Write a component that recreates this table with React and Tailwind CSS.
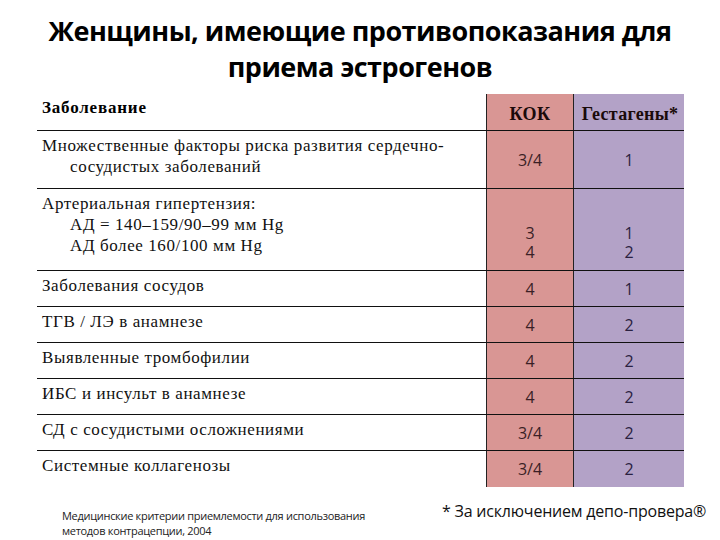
import React from 'react';

const rows = [
  { h: 'h-[58px]', text: ['Множественные факторы риска развития сердечно-', 'сосудистых заболеваний'], kok: ['3/4'], gest: ['1'], numTop: 'pt-[20px]' },
  { h: 'h-[82px]', text: ['Артериальная гипертензия:', 'АД = 140–159/90–99 мм Hg', 'АД более 160/100 мм Hg'], kok: ['3', '4'], gest: ['1', '2'], numTop: 'pt-[35px]' },
  { h: 'h-[36px]', text: ['Заболевания сосудов'], kok: ['4'], gest: ['1'], numTop: 'pt-[9px]' },
  { h: 'h-[36px]', text: ['ТГВ / ЛЭ в анамнезе'], kok: ['4'], gest: ['2'], numTop: 'pt-[9px]' },
  { h: 'h-[36px]', text: ['Выявленные тромбофилии'], kok: ['4'], gest: ['2'], numTop: 'pt-[9px]' },
  { h: 'h-[36px]', text: ['ИБС и инсульт в анамнезе'], kok: ['4'], gest: ['2'], numTop: 'pt-[9px]' },
  { h: 'h-[36px]', text: ['СД с сосудистыми осложнениями'], kok: ['3/4'], gest: ['2'], numTop: 'pt-[9px]' },
  { h: 'h-[36px]', text: ['Системные коллагенозы'], kok: ['3/4'], gest: ['2'], numTop: 'pt-[9px]', last: true },
];

export default function App() {
  return (
    <div className="w-[720px] h-[540px] bg-white relative overflow-hidden">
      {/* Title */}
      <h1 className="pt-[13px] text-center font-bold text-[27px] leading-[36px] tracking-[-0.5px] text-black" style={{ fontFamily: '"Open Sans", sans-serif' }}>
        Женщины, имеющие противопоказания для<br />приема эстрогенов
      </h1>

      {/* Table */}
      <div className="ml-[37px] mt-[9px] w-[647px] flex flex-col" style={{ fontFamily: '"Liberation Serif", serif' }}>
        <div className="flex h-[37px] border-b border-[#111]">
          <div className="w-[449px] pl-[5px] pt-[4px] text-[17px] font-bold leading-[20px] tracking-[0.8px] text-black">Заболевание</div>
          <div className="w-[87px] bg-[#d99694] border-l border-[#222] flex items-center justify-center pt-[5px] text-[18px] font-bold tracking-[0.5px] text-[#1a0a0a]">КОК</div>
          <div className="w-[111px] bg-[#b3a2c7] border-l border-[#222] flex items-center justify-center pt-[5px] pl-[2px] text-[18px] font-bold tracking-[0.3px] text-[#1a0a0a] whitespace-nowrap">Гестагены*</div>
        </div>
        {rows.map((r, i) => (
          <div key={i} className={`flex ${r.h} ${r.last ? '' : 'border-b border-[#111]'}`}>
            <div className="w-[449px] pl-[5px] pt-[4px] text-[17px] leading-[21px] text-[#111] tracking-[0.6px] whitespace-nowrap">
              {r.text.map((t, j) => (
                <div key={j} className={j === 0 ? '' : 'pl-[28px]'}>{t}</div>
              ))}
            </div>
            <div className={`w-[87px] bg-[#d99694] border-l border-[#222] flex flex-col items-center ${r.numTop} text-[16px] leading-[19px] text-[#3b1f26]`} style={{ fontFamily: '"Open Sans", sans-serif' }}>
              {r.kok.map((n, j) => <div key={j} className="h-[19px]">{n}</div>)}
            </div>
            <div className={`w-[111px] bg-[#b3a2c7] border-l border-[#222] flex flex-col items-center ${r.numTop} text-[16px] leading-[19px] text-[#2a2140]`} style={{ fontFamily: '"Open Sans", sans-serif' }}>
              {r.gest.map((n, j) => <div key={j} className="h-[19px]">{n}</div>)}
            </div>
          </div>
        ))}
      </div>

      {/* Footer */}
      <div className="flex mt-[14px]" style={{ fontFamily: '"Open Sans", sans-serif' }}>
        <div className="ml-[62px] mt-[7px] w-[340px] text-[11px] leading-[15px] text-[#222] tracking-[-0.3px]">
          Медицинские критерии приемлемости для использования<br />методов контрацепции, 2004
        </div>
        <div className="ml-[40px] text-[16px] leading-[20px] text-[#111] tracking-[-0.2px] whitespace-nowrap">
          * За исключением депо-провера®
        </div>
      </div>
    </div>
  );
}
